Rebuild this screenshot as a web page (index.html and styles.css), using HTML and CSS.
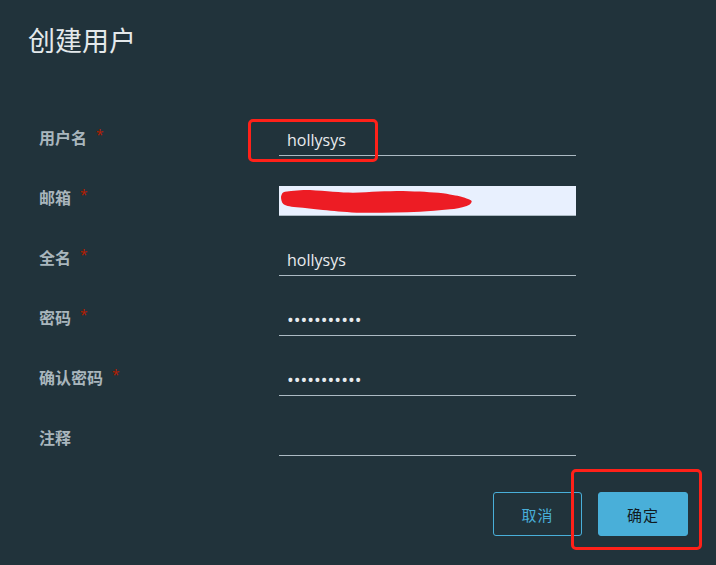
FILE: index.html
```html
<!DOCTYPE html>
<html lang="zh-CN">
<head>
<meta charset="utf-8">
<title>创建用户</title>
<link rel="stylesheet" href="styles.css">
</head>
<body>
<div class="modal">
  <h1 class="title">创建用户</h1>
  <form class="form">
    <label class="label">用户名<span class="req">*</span></label>
    <div class="field">
      <input class="input" type="text" value="hollysys">
      <span class="mark mark-name"></span>
    </div>

    <label class="label">邮箱<span class="req">*</span></label>
    <div class="field">
      <input class="input input-auto" type="text" value="">
      <svg class="scribble" width="192" height="24" viewBox="0 0 192 24"><path d="M0 6.7 C1 3 2 2 4 1.7 C12 0.5 20 0 29 0 C45 1 60 2.7 72 2.7 C90 2 105 1 122 1 C138 1.5 150 2 162 3.3 C172 5 178 6 182 7.3 C187 9 191 10 190.7 11.7 C190 14 188 15 185.7 16 C180 18 174 19 169 19.3 C158 20.5 148 21 139 21.7 C118 22.5 96 23 75.7 22.7 C62 22 52 21 42 20 C32 19 24 18 15.7 17.3 C8 16.5 4 15.5 2.3 14 C0.5 12 0 9 0 6.7 Z" fill="#ed1c24"/></svg>
    </div>

    <label class="label">全名<span class="req">*</span></label>
    <div class="field"><input class="input" type="text" value="hollysys"></div>

    <label class="label">密码<span class="req">*</span></label>
    <div class="field"><input class="input input-pw" type="password" value="hollysys123"></div>

    <label class="label">确认密码<span class="req">*</span></label>
    <div class="field"><input class="input input-pw" type="password" value="hollysys123"></div>

    <label class="label">注释</label>
    <div class="field"><input class="input" type="text" value=""></div>
  </form>
  <div class="actions">
    <button class="btn btn-outline" type="button">取消</button>
    <div class="btn-wrap">
      <button class="btn btn-primary" type="button">确定</button>
      <span class="mark mark-ok"></span>
    </div>
  </div>
</div>
</body>
</html>
```
FILE: styles.css
```css
html, body {
  margin: 0;
  padding: 0;
  background: #21333b;
  height: 100%;
  overflow: hidden;
}
body {
  font-family: "Open Sans", "Noto Sans CJK SC", sans-serif;
  color: #e9ecef;
}
.modal {
  padding: 0 28px;
}
.title {
  margin: 0;
  padding-top: 24px;
  font-family: "Noto Sans CJK SC", sans-serif;
  font-weight: 400;
  font-size: 27px;
  line-height: 32px;
  color: #e4e9eb;
}
.form {
  margin-top: 55px;
  padding-left: 11px;
  display: grid;
  grid-template-columns: 240px 297px;
  grid-auto-rows: 60px;
  align-items: center;
}
.label {
  font-family: "Noto Sans CJK SC", sans-serif;
  font-weight: 700;
  font-size: 16px;
  line-height: 20px;
  color: #a9b6bd;
  padding-bottom: 8px;
  display: flex;
  align-items: flex-start;
}
.req {
  color: #b81d00;
  font-family: "Open Sans", sans-serif;
  font-weight: 400;
  font-size: 14px;
  line-height: 16px;
  margin-left: 9px;
}
.field {
  position: relative;
  height: 30px;
}
.input {
  box-sizing: border-box;
  display: block;
  width: 297px;
  height: 30px;
  margin: 0;
  padding: 0 8px 2px;
  border: 0;
  border-bottom: 1px solid #acbac3;
  background: transparent;
  color: #e9ecef;
  font-family: "Open Sans", sans-serif;
  font-size: 16px;
  outline: none;
}
.input-auto {
  background: #e8f0fe;
}
.input-pw {
  font-size: 18px;
  letter-spacing: 0;
}
.scribble {
  position: absolute;
  left: 2px;
  top: 4px;
}
.mark {
  position: absolute;
  border: 3px solid #ff2119;
  border-radius: 5px;
  box-sizing: border-box;
  pointer-events: none;
}
.mark-name {
  left: -31px;
  top: -7px;
  width: 130px;
  height: 43px;
}
.actions {
  margin-top: 21px;
  display: flex;
  justify-content: flex-end;
  gap: 16px;
}
.btn-wrap {
  position: relative;
}
.btn {
  box-sizing: border-box;
  display: block;
  height: 44px;
  margin: 0;
  border-radius: 3px;
  font-family: "Noto Sans CJK SC", sans-serif;
  font-size: 15px;
  letter-spacing: 1px;
  cursor: pointer;
}
.btn-outline {
  width: 89px;
  background: transparent;
  border: 1px solid #49afd9;
  color: #49afd9;
}
.btn-primary {
  width: 90px;
  background: #49afd9;
  border: 1px solid #49afd9;
  color: #111a1f;
}
.mark-ok {
  left: -27px;
  top: -23px;
  width: 131px;
  height: 81px;
}
```
